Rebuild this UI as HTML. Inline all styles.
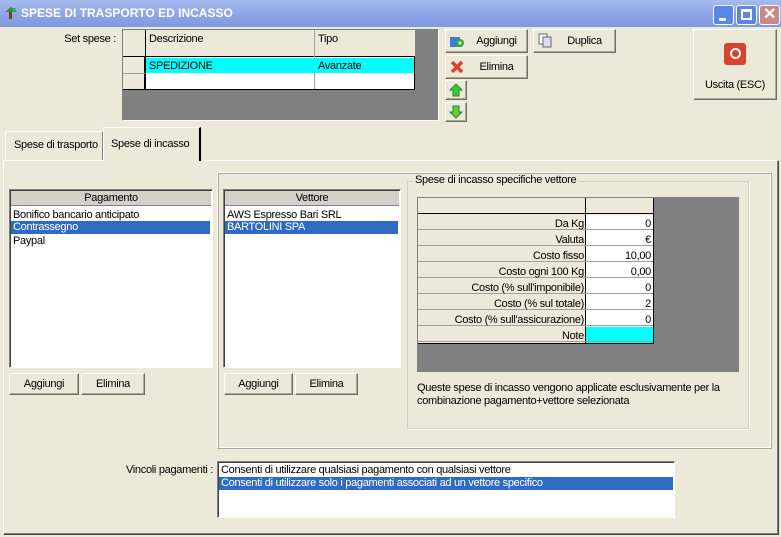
<!DOCTYPE html><html><head><style>
*{box-sizing:border-box;margin:0;padding:0}
body{width:781px;height:537px;background:#ece9d8;font-family:"Liberation Sans",sans-serif;font-size:11px;letter-spacing:-0.3px;position:relative;overflow:hidden;color:#000}
.a{position:absolute}
.btn{position:absolute;background:#ece9d8;border:1px solid;border-color:#fff #716f64 #716f64 #fff;box-shadow:inset -1px -1px 0 #aca899;display:flex;align-items:center;justify-content:center}
.sunk{position:absolute;border:1px solid;border-color:#808080 #fff #fff #808080;box-shadow:inset 1px 1px 0 #404040}
.sel{background:#316ac5;color:#fff}
</style></head><body>
<div class="a" style="left:0;top:0;width:781px;height:27px;background:linear-gradient(#a6bbef,#8aa3e4 60%,#7f9ae0);"></div>
<svg class="a" style="left:3px;top:6px" width="16" height="14"><path d="M2 6 L8 1 L14 6 Z" fill="#2a8a3a"/><rect x="6" y="6" width="3" height="7" fill="#6b4a1a"/><circle cx="11" cy="4" r="2" fill="#3a6"/></svg>
<div class="a" style="left:21px;top:6px;color:#fff;font-weight:bold;font-size:12px;letter-spacing:0">SPESE DI TRASPORTO ED INCASSO</div>
<div class="a" style="left:713px;top:5px;width:21px;height:20px;background:#5c85e6;border:1px solid #fff;border-radius:3px"><div class="a" style="left:5px;top:12px;width:7px;height:3px;background:#fff"></div></div>
<div class="a" style="left:736px;top:5px;width:21px;height:20px;background:#5c85e6;border:1px solid #fff;border-radius:3px"><div class="a" style="left:4px;top:3px;width:11px;height:11px;border:2px solid #fff;border-top-width:3px"></div></div>
<div class="a" style="left:759px;top:5px;width:21px;height:20px;background:#c88a86;border:1px solid #fff;border-radius:3px;color:#fff;font-size:16px;font-weight:bold;text-align:center;line-height:18px">✕</div>

<div class="a" style="left:60px;top:33px;width:56px;text-align:right">Set spese :</div>
<div class="a" style="left:122px;top:29px;width:317px;height:92px;background:#808080;border:1px solid;border-color:#808080 #fff #fff #808080"></div>
<div class="a" style="left:123px;top:30px;width:292px;height:60px;background:#fff;border-right:1px solid #000;border-bottom:1px solid #000"></div>
<div class="a" style="left:123px;top:30px;width:22px;height:59px;background:#ece9d8;border-right:1px solid #000"></div>
<div class="a" style="left:123px;top:30px;width:292px;height:27px;background:#ece9d8;border-bottom:1px solid #000"></div>
<div class="a" style="left:145px;top:30px;width:1px;height:59px;background:#000"></div>
<div class="a" style="left:314px;top:30px;width:1px;height:59px;background:#a0a0a0"></div>
<div class="a" style="left:123px;top:73px;width:22px;height:1px;background:#a0a0a0"></div>
<div class="a" style="left:146px;top:58px;width:268px;height:15px;background:#00ffff"></div>
<div class="a" style="left:149px;top:33px">Descrizione</div><div class="a" style="left:318px;top:33px">Tipo</div>
<div class="a" style="left:149px;top:60px">SPEDIZIONE</div><div class="a" style="left:318px;top:60px">Avanzate</div>

<div class="btn" style="left:445px;top:29px;width:83px;height:24px"><svg class="a" style="left:3px;top:4px" width="16" height="14"><rect x="1" y="3" width="10" height="10" fill="#3f7bd0"/><circle cx="11" cy="9" r="4" fill="#3a3"/><path d="M9 9h4M11 7v4" stroke="#fff"/></svg><span style="margin-left:20px">Aggiungi</span></div>
<div class="btn" style="left:533px;top:29px;width:83px;height:24px"><svg class="a" style="left:3px;top:3px" width="16" height="16"><rect x="2" y="1" width="8" height="10" fill="#fff" stroke="#667"/><rect x="6" y="4" width="8" height="10" fill="#dde" stroke="#667"/></svg><span style="margin-left:20px">Duplica</span></div>
<div class="btn" style="left:445px;top:55px;width:83px;height:24px"><svg class="a" style="left:4px;top:4px" width="14" height="14"><path d="M2 2L12 12M12 2L2 12" stroke="#e04030" stroke-width="3.5"/></svg><span style="margin-left:20px">Elimina</span></div>
<div class="btn" style="left:445px;top:80px;width:22px;height:20px"><svg width="14" height="14"><path d="M7 1L13 7H10V13H4V7H1Z" fill="#3c3" stroke="#283"/></svg></div>
<div class="btn" style="left:445px;top:102px;width:22px;height:20px"><svg width="14" height="14"><path d="M7 13L13 7H10V1H4V7H1Z" fill="#6c3" stroke="#283"/></svg></div>
<div class="btn" style="left:693px;top:29px;width:84px;height:71px;flex-direction:column"><div style="width:22px;height:22px;background:#d9422e;border-radius:3px;display:flex;align-items:center;justify-content:center;margin-top:4px"><div style="width:11px;height:11px;border:2px solid #fff;border-radius:50%"></div></div><div style="margin-top:14px">Uscita (ESC)</div></div>

<div class="a" style="left:3px;top:160px;width:776px;height:375px;border:1px solid;border-color:#fff #404040 #404040 #fff;box-shadow:inset -1px -1px 0 #808080"></div>
<div class="a" style="left:5px;top:131px;width:98px;height:29px;border:1px solid;border-color:#fff #808080 transparent #fff;border-bottom:none"></div>
<div class="a" style="left:14px;top:139px">Spese di trasporto</div>
<div class="a" style="left:103px;top:127px;width:98px;height:34px;background:#ece9d8;border-top:1px solid #fff;border-left:1px solid #fff;border-right:2px solid #000"></div>
<div class="a" style="left:111px;top:138px">Spese di incasso</div>

<div class="sunk" style="left:9px;top:189px;width:204px;height:179px;background:#fff"></div>
<div class="a" style="left:11px;top:191px;width:200px;height:15px;background:#d4d0c8;border-bottom:1px solid #808080;text-align:center;line-height:14px">Pagamento</div>
<div class="a" style="left:13px;top:209px">Bonifico bancario anticipato</div>
<div class="a sel" style="left:11px;top:221px;width:199px;height:13px;padding-left:2px">Contrassegno</div>
<div class="a" style="left:13px;top:235px">Paypal</div>
<div class="btn" style="left:9px;top:373px;width:70px;height:22px">Aggiungi</div>
<div class="btn" style="left:81px;top:373px;width:64px;height:22px">Elimina</div>

<div class="a" style="left:217px;top:172px;width:555px;height:277px;border:1px solid;border-color:#fff #aca899 #aca899 #fff;box-shadow:inset 1px 1px 0 #aca899, inset -1px -1px 0 #fff"></div>
<div class="sunk" style="left:223px;top:189px;width:178px;height:179px;background:#fff"></div>
<div class="a" style="left:225px;top:191px;width:174px;height:15px;background:#d4d0c8;border-bottom:1px solid #808080;text-align:center;line-height:14px">Vettore</div>
<div class="a" style="left:227px;top:209px">AWS Espresso Bari SRL</div>
<div class="a sel" style="left:225px;top:221px;width:173px;height:13px;padding-left:2px">BARTOLINI SPA</div>
<div class="btn" style="left:224px;top:373px;width:69px;height:22px">Aggiungi</div>
<div class="btn" style="left:295px;top:373px;width:63px;height:22px">Elimina</div>

<div class="a" style="left:407px;top:181px;width:342px;height:248px;border:1px solid #d0d0bf;box-shadow:1px 1px 0 #fff"></div>
<div class="a" style="left:413px;top:174px;background:#ece9d8;padding:0 2px">Spese di incasso specifiche vettore</div>
<div class="a" style="left:417px;top:197px;width:322px;height:175px;background:#808080"></div>
<div class="a" style="left:418px;top:198px;width:236px;height:146px;background:#ece9d8;border-right:1px solid #000;border-bottom:1px solid #000"></div>
<div class="a" style="left:418px;top:198px;width:235px;height:16px;border-bottom:1px solid #000"></div>
<div class="a" style="left:585px;top:198px;width:1px;height:145px;background:#000"></div>
<div class="a" style="left:586px;top:215px;width:67px;height:112px;background:#fff"></div>
<div class="a" style="left:586px;top:327px;width:67px;height:16px;background:#00ffff"></div>
<div class="a" style="left:418px;top:214px;width:235px;height:129px;background:repeating-linear-gradient(transparent 0 15px,#a0a0a0 15px 16px)"></div>
<div class="a" style="left:418px;top:216px;width:166px;text-align:right;line-height:16px">Da Kg<br>Valuta<br>Costo fisso<br>Costo ogni 100 Kg<br>Costo (% sull'imponibile)<br>Costo (% sul totale)<br>Costo (% sull'assicurazione)<br>Note</div>
<div class="a" style="left:586px;top:216px;width:65px;text-align:right;line-height:16px">0<br>€<br>10,00<br>0,00<br>0<br>2<br>0</div>
<div class="a" style="left:417px;top:382px;line-height:13px">Queste spese di incasso vengono applicate esclusivamente per la<br>combinazione pagamento+vettore selezionata</div>

<div class="a" style="left:110px;top:464px;width:103px;text-align:right">Vincoli pagamenti :</div>
<div class="sunk" style="left:217px;top:461px;width:458px;height:57px;background:#fff"></div>
<div class="a" style="left:221px;top:464px">Consenti di utilizzare qualsiasi pagamento con qualsiasi vettore</div>
<div class="a sel" style="left:219px;top:477px;width:454px;height:13px;padding-left:2px">Consenti di utilizzare solo i pagamenti associati ad un vettore specifico</div>
</body></html>
